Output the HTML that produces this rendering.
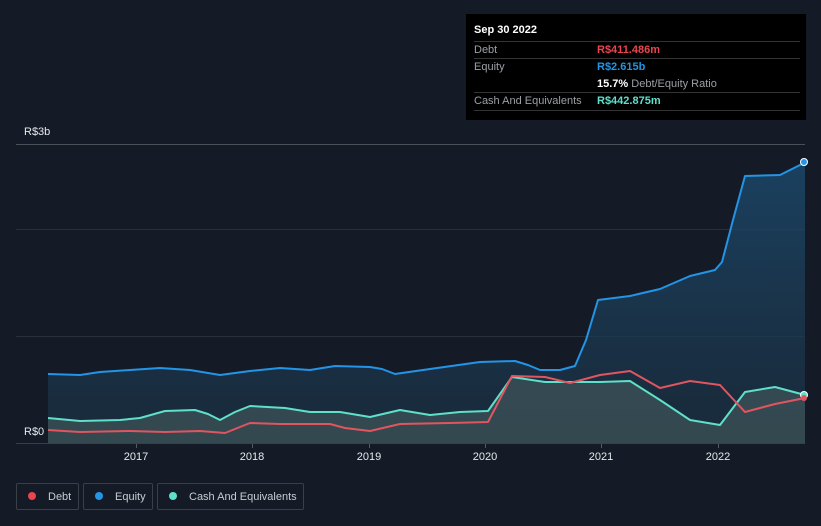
<!DOCTYPE html>
<html><head><meta charset="utf-8"><style>
body{margin:0;width:821px;height:526px;background:#151b26;font-family:"Liberation Sans",sans-serif;overflow:hidden;position:relative}
.tip{position:absolute;left:466px;top:14px;width:340px;height:106px;background:#000;color:#fff;font-size:11px}
.tip .r{position:absolute;left:8px;width:326px;border-top:1px solid #333}
.lbl{color:#9aa0a6}
.leg{position:absolute;top:483px;height:27px;border:1px solid #3a3f48;border-radius:2px;color:#c8ccd2;font-size:11px;line-height:27px;box-sizing:border-box}
.dot{display:inline-block;width:8px;height:8px;border-radius:50%;margin:0 12px 0 11px;vertical-align:-0px}
</style></head><body>
<svg width="821" height="526" style="position:absolute;left:0;top:0">
<defs>
<linearGradient id="eg" x1="0" y1="0" x2="0" y2="1"><stop offset="0" stop-color="#1c4a6e" stop-opacity=".8"/><stop offset="1" stop-color="#1b3346" stop-opacity=".6"/></linearGradient>
</defs>
<g stroke="#2a303a" stroke-width="1">
<line x1="16" y1="144.5" x2="805" y2="144.5" stroke="#4a4f58"/><line x1="16" y1="229.5" x2="805" y2="229.5"/><line x1="16" y1="336.5" x2="805" y2="336.5"/>
</g>
<g stroke-linejoin="round" stroke-width="2">
<path d="M48,374 L80,375 L100,372 L130,370 L160,368 L190,370 L220,375 L250,371 L280,368 L310,370 L335,366 L370,367 L382,369 L395,374 L430,369 L480,362 L515,361 L528,365 L540,370 L560,370 L575,366 L586,340 L598,300 L630,296 L660,289 L690,276 L715,270 L722,262 L733,220 L745,176 L780,175 L800,165 L805,162 L805,443 L48,443Z" fill="url(#eg)" stroke="none"/>
<path d="M48,418 L80,421 L120,420 L140,418 L165,411 L195,410 L208,414 L220,420 L235,412 L250,406 L285,408 L310,412 L340,412 L370,417 L400,410 L430,415 L460,412 L488,411 L512,377 L545,382 L600,382 L630,381 L660,400 L690,420 L720,425 L745,392 L775,387 L805,395 L805,443 L48,443Z" fill="#3d5358" fill-opacity=".75" stroke="none"/>
<path d="M48,374 L80,375 L100,372 L130,370 L160,368 L190,370 L220,375 L250,371 L280,368 L310,370 L335,366 L370,367 L382,369 L395,374 L430,369 L480,362 L515,361 L528,365 L540,370 L560,370 L575,366 L586,340 L598,300 L630,296 L660,289 L690,276 L715,270 L722,262 L733,220 L745,176 L780,175 L800,165 L805,162" fill="none" stroke="#2394e6"/>
<path d="M48,418 L80,421 L120,420 L140,418 L165,411 L195,410 L208,414 L220,420 L235,412 L250,406 L285,408 L310,412 L340,412 L370,417 L400,410 L430,415 L460,412 L488,411 L512,377 L545,382 L600,382 L630,381 L660,400 L690,420 L720,425 L745,392 L775,387 L805,395" fill="none" stroke="#5ee0c9"/>
<path d="M48,430 L80,432 L130,431 L165,432 L200,431 L225,433 L250,423 L280,424 L330,424 L345,428 L370,431 L400,424 L450,423 L488,422 L512,376 L545,377 L570,383 L600,375 L630,371 L660,388 L690,381 L720,385 L745,412 L775,404 L805,398" fill="none" stroke="#e05560"/>
</g>
<line x1="16" y1="443.5" x2="805" y2="443.5" stroke="#3a404a"/>
<g stroke="#555b64"><line x1="136.5" y1="444" x2="136.5" y2="448"/><line x1="252.5" y1="444" x2="252.5" y2="448"/><line x1="369.5" y1="444" x2="369.5" y2="448"/><line x1="485.5" y1="444" x2="485.5" y2="448"/><line x1="601.5" y1="444" x2="601.5" y2="448"/><line x1="718.5" y1="444" x2="718.5" y2="448"/></g>
<circle cx="804" cy="162" r="3.5" fill="#2394e6" stroke="#fff" stroke-width="1"/>
<circle cx="804" cy="395" r="3.5" fill="#5ee0c9" stroke="#fff" stroke-width="1"/>
<circle cx="804" cy="398" r="3" fill="#e05560"/>
<g fill="#e6e8eb" font-size="11" font-family="Liberation Sans, sans-serif">
<text x="24" y="135">R$3b</text><text x="24" y="435">R$0</text>
<g text-anchor="middle"><text x="136" y="460">2017</text><text x="252" y="460">2018</text><text x="369" y="460">2019</text><text x="485" y="460">2020</text><text x="601" y="460">2021</text><text x="718" y="460">2022</text></g>
</g>
</svg>
<div class="tip">
<div style="position:absolute;left:8px;top:10px;font-weight:bold">Sep 30 2022</div>
<div class="r" style="top:27px"><span class="lbl" style="position:absolute;top:2px">Debt</span><span style="position:absolute;left:123px;top:2px;color:#e8454f;font-weight:bold">R$411.486m</span></div>
<div class="r" style="top:44px"><span class="lbl" style="position:absolute;top:2px">Equity</span><span style="position:absolute;left:123px;top:2px;color:#2394e6;font-weight:bold">R$2.615b</span><span style="position:absolute;left:123px;top:19px;white-space:nowrap"><b>15.7%</b> <span class="lbl">Debt/Equity Ratio</span></span></div>
<div class="r" style="top:78px"><span class="lbl" style="position:absolute;top:2px">Cash And Equivalents</span><span style="position:absolute;left:123px;top:2px;color:#5ee0c9;font-weight:bold">R$442.875m</span></div>
<div class="r" style="top:96px"></div>
</div>
<div class="leg" style="left:16px;width:63px"><span class="dot" style="background:#e8454f"></span>Debt</div>
<div class="leg" style="left:83px;width:70px"><span class="dot" style="background:#2394e6"></span>Equity</div>
<div class="leg" style="left:157px;width:147px"><span class="dot" style="background:#5ee0c9"></span>Cash And Equivalents</div>
</body></html>
